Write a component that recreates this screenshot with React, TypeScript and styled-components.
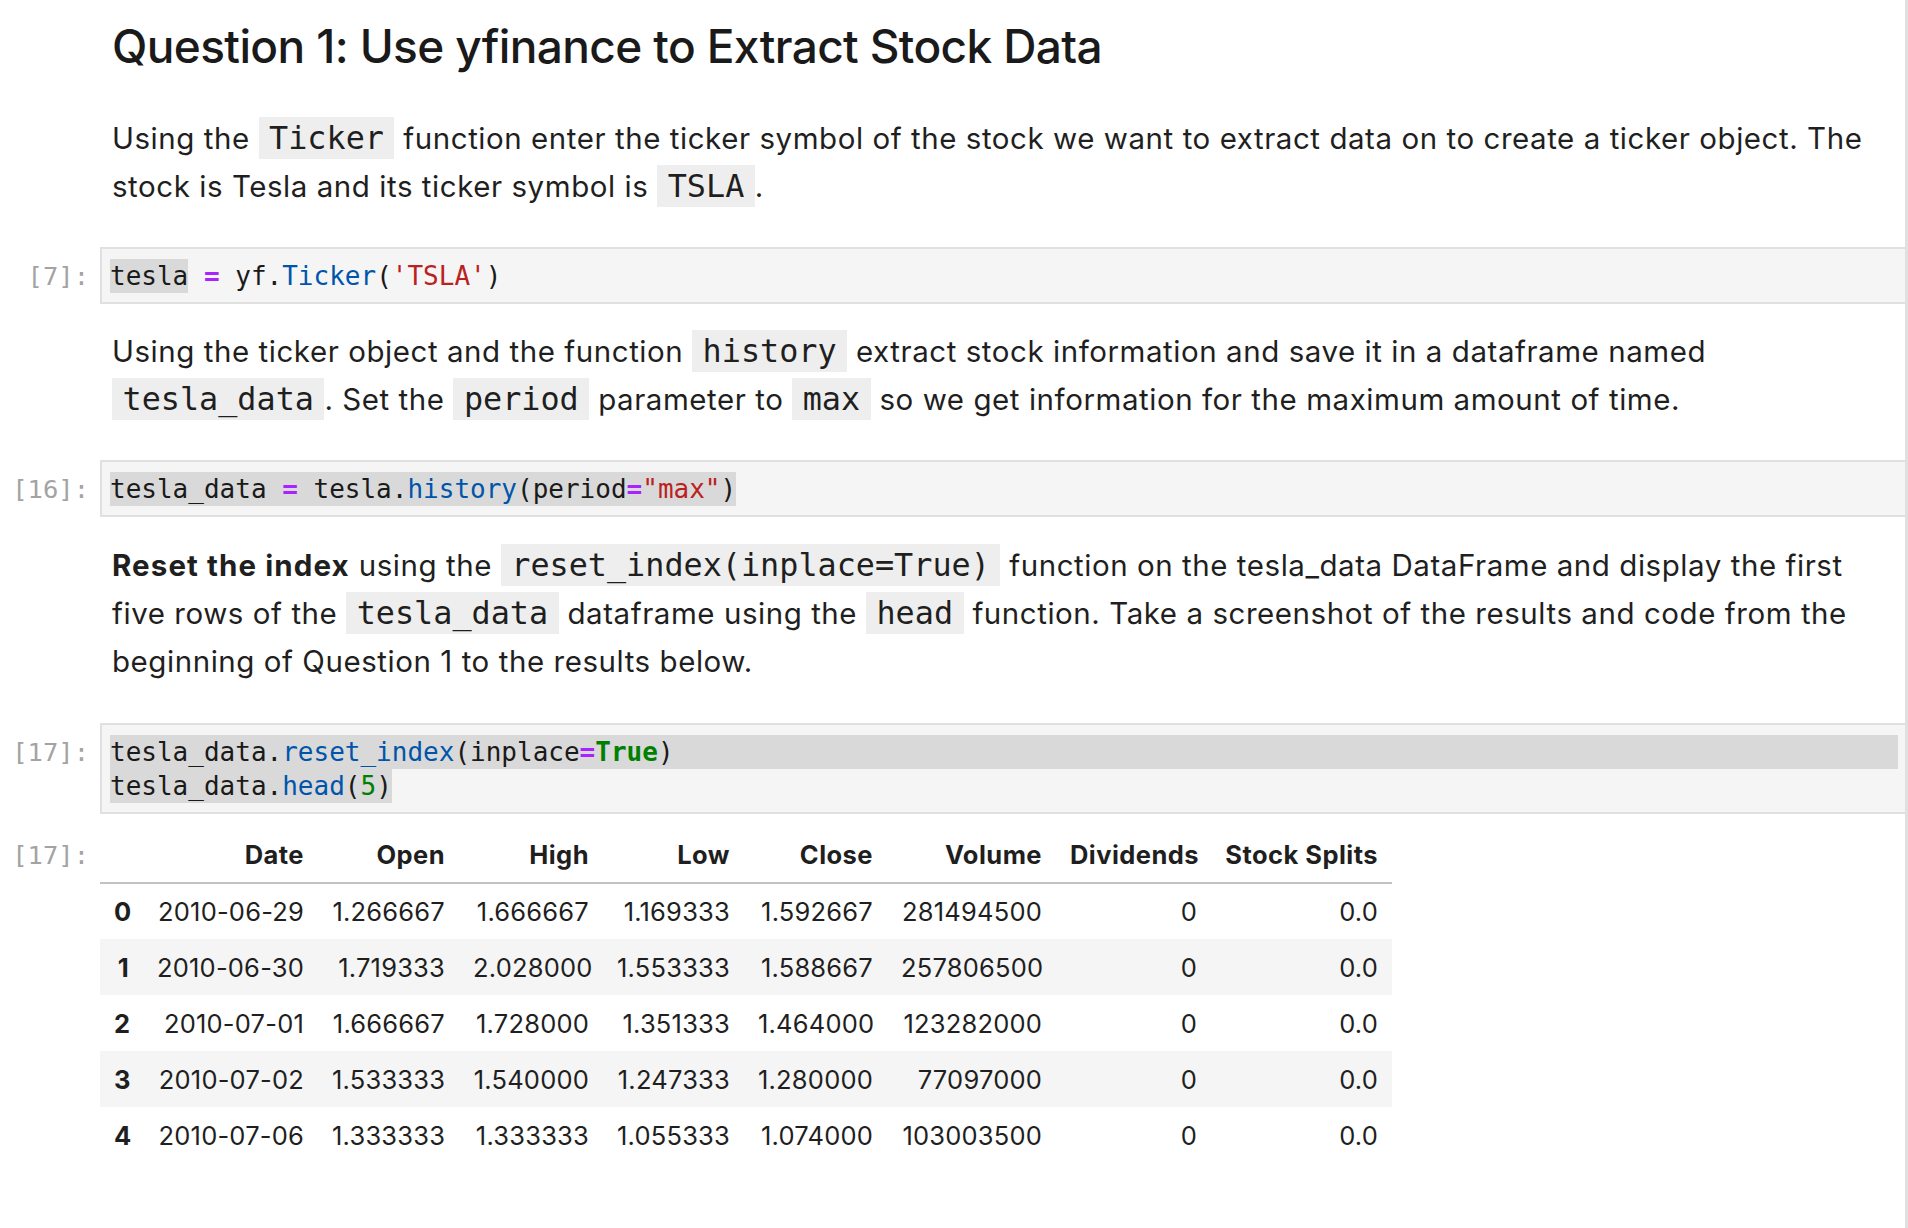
import React from "react";
import styled, { createGlobalStyle } from "styled-components";

const GlobalStyle = createGlobalStyle`
  html, body { margin: 0; padding: 0; background: #ffffff; }
  * { box-sizing: border-box; }
`;

const TEXT_FONT = `Inter, "Noto Sans", "Liberation Sans", sans-serif`;
const MONO_FONT = `"DejaVu Sans Mono", "Liberation Mono", monospace`;

const Notebook = styled.div`
  width: 1908px;
  min-height: 1228px;
  border-right: 3px solid #e0e0e0;
  padding-top: 19px;
  font-family: ${TEXT_FONT};
  color: #1f1f1f;
`;

const Cell = styled.div<{ $mt?: number; $mb?: number }>`
  display: grid;
  grid-template-columns: 100px 1fr;
  margin-top: ${(p) => p.$mt ?? 0}px;
  margin-bottom: ${(p) => p.$mb ?? 0}px;
`;

const Prompt = styled.div<{ $pt: number }>`
  font-family: ${MONO_FONT};
  font-size: 25.5px;
  line-height: 34px;
  color: #a3a3a3;
  text-align: right;
  padding-right: 11px;
  padding-top: ${(p) => p.$pt}px;
  white-space: nowrap;
`;

const MarkdownBody = styled.div`
  padding-left: 12px;
`;

const Heading = styled.h2`
  margin: 0 0 40px 0;
  font-size: 46px;
  line-height: 55px;
  font-weight: 500;
  letter-spacing: -0.62px;
  color: #1a1a1a;
  white-space: nowrap;
`;

const Para = styled.p`
  margin: 0;
  font-size: 29.5px;
  line-height: 48px;
  letter-spacing: 0.55px;
  white-space: nowrap;
  color: #1f1f1f;
`;

const InlineCode = styled.code`
  font-family: ${MONO_FONT};
  font-size: 31.8px;
  letter-spacing: 0;
  background: #eeeeee;
  padding: 2px 10.5px 3px 10.5px;
  color: #1f1f1f;
`;

const Strong = styled.strong`
  font-weight: 700;
  letter-spacing: 1.1px;
`;

const InputArea = styled.div`
  background: #f5f5f5;
  border: 2px solid #e0e0e0;
  border-right: 0;
  padding: 10px 7px 9px 8px;
  font-family: ${MONO_FONT};
  font-size: 26px;
  line-height: 34px;
  color: #1a1a1a;
  white-space: pre;
`;

const CodeLine = styled.div<{ $full?: boolean }>`
  height: 34px;
  ${(p) => (p.$full ? "background: #d9d9d9;" : "")}
`;

const Mark = styled.span`
  background: #d9d9d9;
  display: inline-block;
  height: 34px;
`;

const Op = styled.span`
  color: #aa22ff;
  font-weight: 700;
`;
const Prop = styled.span`
  color: #0055aa;
`;
const Str = styled.span`
  color: #ba2121;
`;
const Kw = styled.span`
  color: #008000;
  font-weight: 700;
`;
const Num = styled.span`
  color: #008000;
`;

const OutputArea = styled.div`
  padding-top: 0;
`;

const Table = styled.table`
  border-collapse: collapse;
  border-spacing: 0;
  table-layout: fixed;
  width: 1292px;
  font-family: ${TEXT_FONT};
  font-size: 25.5px;
  letter-spacing: 0.2px;
  color: #1f1f1f;
`;

const HeadCell = styled.th`
  height: 57px;
  padding: 0 14px;
  text-align: right;
  font-weight: 700;
  letter-spacing: 0.45px;
  vertical-align: middle;
  border-bottom: 2px solid #c2c2c2;
  white-space: nowrap;
`;

const Row = styled.tr<{ $striped: boolean }>`
  background: ${(p) => (p.$striped ? "#f5f5f5" : "transparent")};
`;

const IndexCell = styled.th`
  height: 56px;
  padding: 0 14px;
  text-align: right;
  font-weight: 700;
  vertical-align: middle;
`;

const DataCell = styled.td`
  height: 56px;
  padding: 0 14px;
  text-align: right;
  font-weight: 400;
  vertical-align: middle;
  white-space: nowrap;
`;

const columns = [
  { name: "", width: 43 },
  { name: "Date", width: 175 },
  { name: "Open", width: 141 },
  { name: "High", width: 144 },
  { name: "Low", width: 141 },
  { name: "Close", width: 143 },
  { name: "Volume", width: 169 },
  { name: "Dividends", width: 155 },
  { name: "Stock Splits", width: 181 },
];

const rows = [
  ["2010-06-29", "1.266667", "1.666667", "1.169333", "1.592667", "281494500", "0", "0.0"],
  ["2010-06-30", "1.719333", "2.028000", "1.553333", "1.588667", "257806500", "0", "0.0"],
  ["2010-07-01", "1.666667", "1.728000", "1.351333", "1.464000", "123282000", "0", "0.0"],
  ["2010-07-02", "1.533333", "1.540000", "1.247333", "1.280000", "77097000", "0", "0.0"],
  ["2010-07-06", "1.333333", "1.333333", "1.055333", "1.074000", "103003500", "0", "0.0"],
];

export default function App() {
  return (
    <>
      <GlobalStyle />
      <Notebook>
        <Cell>
          <div />
          <MarkdownBody>
            <Heading>Question 1: Use yfinance to Extract Stock Data</Heading>
            <Para>
              Using the <InlineCode>Ticker</InlineCode> function enter the ticker symbol of the stock we want to extract data on to create a ticker object. The
              <br />
              stock is Tesla and its ticker symbol is <InlineCode>TSLA</InlineCode>.
            </Para>
          </MarkdownBody>
        </Cell>

        <Cell $mt={37} $mb={23}>
          <Prompt $pt={12}>[7]:</Prompt>
          <InputArea>
            <CodeLine>
              <Mark>tesla</Mark> <Op>=</Op> yf.<Prop>Ticker</Prop>(<Str>'TSLA'</Str>)
            </CodeLine>
          </InputArea>
        </Cell>

        <Cell>
          <div />
          <MarkdownBody>
            <Para>
              Using the ticker object and the function <InlineCode>history</InlineCode> extract stock information and save it in a dataframe named
              <br />
              <InlineCode>tesla_data</InlineCode>. Set the <InlineCode>period</InlineCode> parameter to <InlineCode>max</InlineCode> so we get information for the maximum amount of time.
            </Para>
          </MarkdownBody>
        </Cell>

        <Cell $mt={37} $mb={24}>
          <Prompt $pt={12}>[16]:</Prompt>
          <InputArea>
            <CodeLine>
              <Mark>
                tesla_data <Op>=</Op> tesla.<Prop>history</Prop>(period<Op>=</Op><Str>"max"</Str>)
              </Mark>
            </CodeLine>
          </InputArea>
        </Cell>

        <Cell>
          <div />
          <MarkdownBody>
            <Para>
              <Strong>Reset the index</Strong> using the <InlineCode>reset_index(inplace=True)</InlineCode> function on the tesla_data DataFrame and display the first
              <br />
              five rows of the <InlineCode>tesla_data</InlineCode> dataframe using the <InlineCode>head</InlineCode> function. Take a screenshot of the results and code from the
              <br />
              beginning of Question 1 to the results below.
            </Para>
          </MarkdownBody>
        </Cell>

        <Cell $mt={38} $mb={12}>
          <Prompt $pt={12}>[17]:</Prompt>
          <InputArea>
            <CodeLine $full>
              tesla_data.<Prop>reset_index</Prop>(inplace<Op>=</Op><Kw>True</Kw>)
            </CodeLine>
            <CodeLine>
              <Mark>
                tesla_data.<Prop>head</Prop>(<Num>5</Num>)
              </Mark>
            </CodeLine>
          </InputArea>
        </Cell>

        <Cell>
          <Prompt $pt={12}>[17]:</Prompt>
          <OutputArea>
            <Table>
              <colgroup>
                {columns.map((c, i) => (
                  <col key={i} style={{ width: c.width }} />
                ))}
              </colgroup>
              <thead>
                <tr>
                  {columns.map((c, i) => (
                    <HeadCell key={i}>{c.name}</HeadCell>
                  ))}
                </tr>
              </thead>
              <tbody>
                {rows.map((r, i) => (
                  <Row key={i} $striped={i % 2 === 1}>
                    <IndexCell>{i}</IndexCell>
                    {r.map((v, j) => (
                      <DataCell key={j}>{v}</DataCell>
                    ))}
                  </Row>
                ))}
              </tbody>
            </Table>
          </OutputArea>
        </Cell>
      </Notebook>
    </>
  );
}
